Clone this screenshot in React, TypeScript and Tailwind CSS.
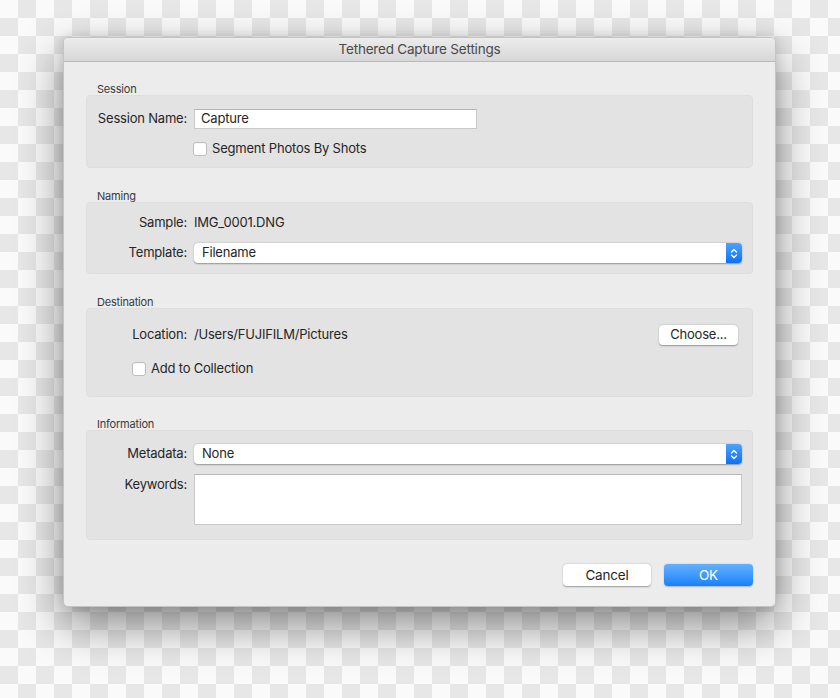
import React from 'react';

const font = { fontFamily: 'Inter, "Noto Sans", "Liberation Sans", sans-serif' };

function Stepper() {
  return (
    <div className="flex h-full w-[16px] items-center justify-center rounded-r-[4px] bg-gradient-to-b from-[#4aa3ff] to-[#0b6ff5]">
      <svg width="8" height="13" viewBox="0 0 8 13" fill="none">
        <path d="M1.5 5 L4 2.5 L6.5 5" stroke="white" strokeWidth="1.3" strokeLinecap="round" strokeLinejoin="round" />
        <path d="M1.5 8 L4 10.5 L6.5 8" stroke="white" strokeWidth="1.3" strokeLinecap="round" strokeLinejoin="round" />
      </svg>
    </div>
  );
}

function Popup({ value }: { value: string }) {
  return (
    <div className="flex h-[20px] w-[548px] items-stretch rounded-[4px] bg-white shadow-[0_0.5px_1.5px_rgba(0,0,0,0.35)]">
      <div className="flex flex-1 items-center pl-[8px] text-[13px] text-[#262626]">{value}</div>
      <Stepper />
    </div>
  );
}

function Checkbox() {
  return (
    <div className="h-[14px] w-[14px] rounded-[3px] border border-[#bdbdbd] bg-white shadow-[inset_0_1px_0_rgba(0,0,0,0.03)]" />
  );
}

function Label({ children }: { children: React.ReactNode }) {
  return <div className="w-[100px] shrink-0 text-right text-[13px] text-[#262626]">{children}</div>;
}

function Section({ title, children, className }: { title: string; children: React.ReactNode; className?: string }) {
  return (
    <div>
      <div className="h-[12px] pl-[11px] text-[11px] leading-[12px] text-[#3a3a3a]">{title}</div>
      <div className={`rounded-[4px] border border-[#dedede] bg-[#e3e3e3] ${className ?? ''}`}>{children}</div>
    </div>
  );
}

export default function App() {
  return (
    <div
      className="h-[698px] w-[840px] overflow-hidden bg-[conic-gradient(#e7e7e7_0_25%,#fafafa_0_50%,#e7e7e7_0_75%,#fafafa_0)] bg-[length:36px_36px] pl-[63px] pt-[37px] tracking-[-0.2px]"
      style={font}
    >
      <div className="flex h-[570px] w-[713px] flex-col overflow-hidden rounded-[5px] border border-[#c4c4c4] bg-[#ececec] shadow-[0_18px_45px_rgba(0,0,0,0.45),0_0_12px_rgba(0,0,0,0.12)]">
        <div className="flex h-[24px] shrink-0 items-center justify-center border-b border-[#b9b9b9] bg-gradient-to-b from-[#ececec] to-[#d7d7d7] text-[13.5px] text-[#4a4a4a]">
          Tethered Capture Settings
        </div>

        <div className="flex flex-col px-[22px] pb-[22px] pt-[21px]">
          <Section title="Session" className="h-[73px]">
            <div className="flex items-center pt-[13px]">
              <Label>Session Name:</Label>
              <div className="ml-[7px] flex h-[20px] w-[283px] items-center border border-[#c9c9c9] border-t-[#b5b5b5] bg-white pl-[6px] text-[13px] text-[#262626]">
                Capture
              </div>
            </div>
            <div className="mt-[13px] flex h-[14px] items-center pl-[106px]">
              <Checkbox />
              <span className="ml-[5px] text-[13px] text-[#262626]">Segment Photos By Shots</span>
            </div>
          </Section>

          <div className="mt-[22px]">
            <Section title="Naming" className="h-[72px]">
              <div className="mt-[10px] flex h-[20px] items-center">
                <Label>Sample:</Label>
                <span className="ml-[7px] text-[13px] text-[#262626]">IMG_0001.DNG</span>
              </div>
              <div className="mt-[10px] flex items-center">
                <Label>Template:</Label>
                <div className="ml-[7px]">
                  <Popup value="Filename" />
                </div>
              </div>
            </Section>
          </div>

          <div className="mt-[22px]">
            <Section title="Destination" className="h-[89px]">
              <div className="mt-[16px] flex h-[20px] items-center">
                <Label>Location:</Label>
                <span className="ml-[7px] text-[13px] text-[#262626]">/Users/FUJIFILM/Pictures</span>
                <div className="ml-auto mr-[14px] flex h-[20px] w-[79px] items-center justify-center rounded-[4px] bg-white text-[13px] text-[#262626] shadow-[0_0.5px_1.5px_rgba(0,0,0,0.35)]">
                  Choose...
                </div>
              </div>
              <div className="mt-[17px] flex h-[14px] items-center pl-[45px]">
                <Checkbox />
                <span className="ml-[5px] text-[13px] text-[#262626]">Add to Collection</span>
              </div>
            </Section>
          </div>

          <div className="mt-[21px]">
            <Section title="Information" className="h-[110px]">
              <div className="mt-[13px] flex items-center">
                <Label>Metadata:</Label>
                <div className="ml-[7px]">
                  <Popup value="None" />
                </div>
              </div>
              <div className="mt-[10px] flex items-start">
                <div className="pt-[1px]">
                  <Label>Keywords:</Label>
                </div>
                <div className="ml-[7px] h-[51px] w-[548px] border border-[#c9c9c9] border-t-[#b5b5b5] bg-white" />
              </div>
            </Section>
          </div>

          <div className="mt-[24px] flex justify-end gap-[13px]">
            <div className="flex h-[22px] w-[88px] items-center justify-center rounded-[4px] bg-white text-[13.5px] text-[#262626] shadow-[0_0.5px_1.5px_rgba(0,0,0,0.35)]">
              Cancel
            </div>
            <div className="flex h-[22px] w-[89px] items-center justify-center rounded-[4px] bg-gradient-to-b from-[#62b0ff] to-[#1581fb] text-[13.5px] text-white shadow-[0_0.5px_1.5px_rgba(0,0,0,0.25)]">
              OK
            </div>
          </div>
        </div>
      </div>
    </div>
  );
}
